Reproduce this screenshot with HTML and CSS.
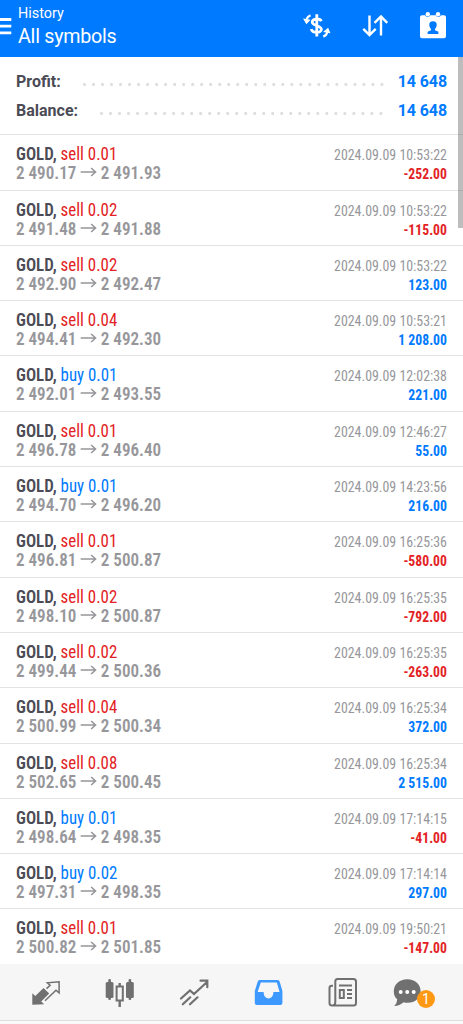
FILE: index.html
```html
<!DOCTYPE html>
<html lang="en">
<head>
<meta charset="utf-8">
<title>History</title>
<link rel="stylesheet" href="styles.css">
</head>
<body>
<div class="app">
<header class="bar">
  <svg class="menu" viewBox="0 0 12 18"><path d="M0 2.500h11.300M0 9.200h11.300M0 15.800h11.300"/></svg>
  <div class="titles"><div class="small">History</div><div class="big">All symbols</div></div>
  <div class="actions">
    <svg width="28" height="28" viewBox="0 0 28 28" fill="none" stroke="#fff" stroke-width="2.300"><path d="M18.300 9.300C17.300 6.300 9.400 6 9.200 10c0 4.200 9.200 3.200 9.200 7.200 0 4.400-9 4.200-10.200 0M13.800 2.200v22.300" stroke-width="2.800"/><path d="M7.500 3.300C5 4.300 4.100 5.500 3.500 7.500M20.300 24.600c2.300-1 3.500-2.200 4.200-4.500"/><path d="M0 6.500l7.600 1.300-4.200 4.500zM27.500 21.300l-7.400-1.300 5-4.300z" fill="#fff" stroke="none"/></svg>
    <svg width="28" height="28" viewBox="0 0 28 28" fill="none" stroke="#fff" stroke-width="2.400"><path d="M8.500 3.500v19.500M2.300 16.800l6.200 6.200 6.200-6.200M20 23.500V4.500M13.500 10.800L20 4.500l6.200 6.300"/></svg>
    <svg width="28" height="28" viewBox="0 0 28 28"><path fill="#fff" d="M3 3.200h3a3 3 0 0 0 5.400 0h5.200a3 3 0 0 0 5.400 0h3a2 2 0 0 1 2 2v19a2 2 0 0 1-2 2H3a2 2 0 0 1-2-2v-19a2 2 0 0 1 2-2z"/><circle cx="8.800" cy="2.300" r="2.200" fill="#fff"/><circle cx="19" cy="2.300" r="2.200" fill="#fff"/><path fill="#007aff" d="M14 9.300c2.600 0 3.900 1.600 3.700 3.800-.1 1.800-.8 3-1.700 3.900v1.300l3.400 1.400V22H8.600v-2.300l3.400-1.400V17c-.9-.9-1.600-2.100-1.700-3.900-.2-2.200 1.100-3.800 3.700-3.800z"/></svg>
  </div>
</header>
<main class="content">
<section class="summary">
  <div class="sum"><b>Profit:</b><i class="dots profit-dots"></i><strong>14 648</strong></div>
  <div class="sum"><b>Balance:</b><i class="dots balance-dots"></i><strong>14 648</strong></div>
</section>
<section class="deals">
<article class="deal"><div class="left"><p class="name">GOLD, <span class="sell">sell 0.01</span></p><p class="price">2 490.17 <svg class="arrow" viewBox="0 0 17 10"><path d="M0 5h15M11 1l4.500 4L11 9"/></svg> 2 491.93</p></div><div class="right"><time>2024.09.09 10:53:22</time><p class="amount sell">-252.00</p></div></article>
<article class="deal"><div class="left"><p class="name">GOLD, <span class="sell">sell 0.02</span></p><p class="price">2 491.48 <svg class="arrow" viewBox="0 0 17 10"><path d="M0 5h15M11 1l4.500 4L11 9"/></svg> 2 491.88</p></div><div class="right"><time>2024.09.09 10:53:22</time><p class="amount sell">-115.00</p></div></article>
<article class="deal"><div class="left"><p class="name">GOLD, <span class="sell">sell 0.02</span></p><p class="price">2 492.90 <svg class="arrow" viewBox="0 0 17 10"><path d="M0 5h15M11 1l4.500 4L11 9"/></svg> 2 492.47</p></div><div class="right"><time>2024.09.09 10:53:22</time><p class="amount buy">123.00</p></div></article>
<article class="deal"><div class="left"><p class="name">GOLD, <span class="sell">sell 0.04</span></p><p class="price">2 494.41 <svg class="arrow" viewBox="0 0 17 10"><path d="M0 5h15M11 1l4.500 4L11 9"/></svg> 2 492.30</p></div><div class="right"><time>2024.09.09 10:53:21</time><p class="amount buy">1 208.00</p></div></article>
<article class="deal"><div class="left"><p class="name">GOLD, <span class="buy">buy 0.01</span></p><p class="price">2 492.01 <svg class="arrow" viewBox="0 0 17 10"><path d="M0 5h15M11 1l4.500 4L11 9"/></svg> 2 493.55</p></div><div class="right"><time>2024.09.09 12:02:38</time><p class="amount buy">221.00</p></div></article>
<article class="deal"><div class="left"><p class="name">GOLD, <span class="sell">sell 0.01</span></p><p class="price">2 496.78 <svg class="arrow" viewBox="0 0 17 10"><path d="M0 5h15M11 1l4.500 4L11 9"/></svg> 2 496.40</p></div><div class="right"><time>2024.09.09 12:46:27</time><p class="amount buy">55.00</p></div></article>
<article class="deal"><div class="left"><p class="name">GOLD, <span class="buy">buy 0.01</span></p><p class="price">2 494.70 <svg class="arrow" viewBox="0 0 17 10"><path d="M0 5h15M11 1l4.500 4L11 9"/></svg> 2 496.20</p></div><div class="right"><time>2024.09.09 14:23:56</time><p class="amount buy">216.00</p></div></article>
<article class="deal"><div class="left"><p class="name">GOLD, <span class="sell">sell 0.01</span></p><p class="price">2 496.81 <svg class="arrow" viewBox="0 0 17 10"><path d="M0 5h15M11 1l4.500 4L11 9"/></svg> 2 500.87</p></div><div class="right"><time>2024.09.09 16:25:36</time><p class="amount sell">-580.00</p></div></article>
<article class="deal"><div class="left"><p class="name">GOLD, <span class="sell">sell 0.02</span></p><p class="price">2 498.10 <svg class="arrow" viewBox="0 0 17 10"><path d="M0 5h15M11 1l4.500 4L11 9"/></svg> 2 500.87</p></div><div class="right"><time>2024.09.09 16:25:35</time><p class="amount sell">-792.00</p></div></article>
<article class="deal"><div class="left"><p class="name">GOLD, <span class="sell">sell 0.02</span></p><p class="price">2 499.44 <svg class="arrow" viewBox="0 0 17 10"><path d="M0 5h15M11 1l4.500 4L11 9"/></svg> 2 500.36</p></div><div class="right"><time>2024.09.09 16:25:35</time><p class="amount sell">-263.00</p></div></article>
<article class="deal"><div class="left"><p class="name">GOLD, <span class="sell">sell 0.04</span></p><p class="price">2 500.99 <svg class="arrow" viewBox="0 0 17 10"><path d="M0 5h15M11 1l4.500 4L11 9"/></svg> 2 500.34</p></div><div class="right"><time>2024.09.09 16:25:34</time><p class="amount buy">372.00</p></div></article>
<article class="deal"><div class="left"><p class="name">GOLD, <span class="sell">sell 0.08</span></p><p class="price">2 502.65 <svg class="arrow" viewBox="0 0 17 10"><path d="M0 5h15M11 1l4.500 4L11 9"/></svg> 2 500.45</p></div><div class="right"><time>2024.09.09 16:25:34</time><p class="amount buy">2 515.00</p></div></article>
<article class="deal"><div class="left"><p class="name">GOLD, <span class="buy">buy 0.01</span></p><p class="price">2 498.64 <svg class="arrow" viewBox="0 0 17 10"><path d="M0 5h15M11 1l4.500 4L11 9"/></svg> 2 498.35</p></div><div class="right"><time>2024.09.09 17:14:15</time><p class="amount sell">-41.00</p></div></article>
<article class="deal"><div class="left"><p class="name">GOLD, <span class="buy">buy 0.02</span></p><p class="price">2 497.31 <svg class="arrow" viewBox="0 0 17 10"><path d="M0 5h15M11 1l4.500 4L11 9"/></svg> 2 498.35</p></div><div class="right"><time>2024.09.09 17:14:14</time><p class="amount buy">297.00</p></div></article>
<article class="deal"><div class="left"><p class="name">GOLD, <span class="sell">sell 0.01</span></p><p class="price">2 500.82 <svg class="arrow" viewBox="0 0 17 10"><path d="M0 5h15M11 1l4.500 4L11 9"/></svg> 2 501.85</p></div><div class="right"><time>2024.09.09 19:50:21</time><p class="amount sell">-147.00</p></div></article>
</section>
<div class="scroll"></div>
</main>
<nav class="tabs">
  <svg viewBox="0 0 32 32"><path fill="#707070" d="M2.300 28.800V17.300l3 2.700 8.200-8 5.700 5.500-8 7.900 3 2.900z"/><path fill="none" stroke="#707070" stroke-width="1.500" d="M15 24.800L26 14.300l3.100 2.600V5.800L17.300 6.800l2.800 2.500-3.600 3.300"/></svg>
  <svg viewBox="0 0 32 32"><g fill="#707070"><rect x="1.700" y="6" width="7.800" height="16" rx="1.500"/><rect x="4.300" y="3" width="2.600" height="21" rx="1"/><rect x="22" y="6" width="7.800" height="16" rx="1.500"/><rect x="24.600" y="3" width="2.600" height="21" rx="1"/></g><path d="M15.700 7V11M15.700 25v6" stroke="#707070" stroke-width="2.400"/><rect x="12.600" y="10.500" width="6.200" height="14" fill="none" stroke="#707070" stroke-width="2"/></svg>
  <svg viewBox="0 0 32 32" fill="none" stroke="#707070" stroke-width="2.200" stroke-linecap="round"><path d="M2 22.500l9-8 4 3.500L28 6M21.500 4.700H28.300v6.500M3.800 28.300l7.500-7M11 28.300l7.500-7"/></svg>
  <svg viewBox="0 0 32 32"><path fill="#3d99ff" fill-rule="evenodd" d="M7.500 4h16.500c1.500 0 2.300.6 2.800 2l2.600 9V27a2 2 0 0 1-2 2H3.800a2 2 0 0 1-2-2V15l2.800-9c.5-1.400 1.200-2 2.900-2zm.3 2.500L4.600 16h6c0 8.500 9.800 8.500 9.800 0h6.200L23.800 6.500z"/></svg>
  <svg viewBox="0 0 32 32" fill="none" stroke="#707070" stroke-width="2"><path d="M10.500 3h16a2.500 2.500 0 0 1 2.500 2.500v21.500a2.500 2.500 0 0 1-2.500 2.500H5A2.500 2.500 0 0 1 2.500 27V12q0-2.300 2.500-2.300h1M10.500 3Q8.300 3 8.300 5.500V26q0 3.500-3 3.500"/><path d="M12 9.500h13M20 14H25M20 18H25M20 22H25"/><rect x="12.800" y="14" width="4" height="8"/></svg>
  <div class="chat"><svg viewBox="0 0 32 32"><path fill="#707070" d="M15.300 3.300c8 0 13.300 5.300 13.300 12s-5.500 11.500-13 11.500q-2 0-4-.5-4 3.500-9.300 3.700 3-3 2.900-6.700C2.800 21.200 1.800 18.600 1.800 15.500c0-7 5.500-12.200 13.500-12.200z"/><g fill="#fff"><circle cx="8.700" cy="16" r="2"/><circle cx="15.200" cy="16" r="2"/><circle cx="21.700" cy="16" r="2"/></g></svg><span class="badge">1</span></div>
</nav>
<div class="foot"></div>
</div>
</body>
</html>
```
FILE: styles.css
```css
* { box-sizing: border-box; }
body, p { margin: 0; }
body { font-family: Roboto, sans-serif; background: #fff; }
.app { width: 463px; height: 1024px; display: flex; flex-direction: column; overflow: hidden; }
.bar { flex: none; height: 57px; background: #007aff; color: #fff; display: flex; }
.menu { width: 12px; height: 18px; margin-top: 17px; stroke: #fff; stroke-width: 2.800; }
.titles { margin-left: 6px; padding-top: 5px; flex: 1; }
.small { font-size: 14.400px; line-height: 17px; }
.big { font-size: 19.700px; line-height: 29px; letter-spacing: -.25px; }
.actions { display: flex; gap: 30px; padding: 12px 16px 0 0; }
.content { position: relative; flex: none; height: 907px; overflow: hidden; }
.summary { height: 77px; padding: 10px 16px 0; }
.sum { height: 28.700px; display: flex; align-items: center; font-size: 16px; color: #4b4b55; white-space: nowrap; }
.sum strong { color: #007aff; margin-left: auto; letter-spacing: -.1px; }
.dots { flex: none; height: 3px; margin-top: 6px; background: radial-gradient(circle at 1.500px 1.500px, #dedede 1.300px, transparent 1.700px) 0 0 / 9.020px 3px repeat-x; }
.profit-dots { width: 301px; margin-left: 22px; }
.balance-dots { width: 283px; margin-left: 22px; }
.deals { padding-top: .3px; }
.deal { height: 55.300px; border-top: 1.500px solid #e3e3e5; padding: 9px 16px 0; display: flex; justify-content: space-between; font-stretch: 75%; font-family: "Roboto Condensed", Roboto, sans-serif; white-space: nowrap; }
.left p { transform-origin: left; }
.right > * { transform-origin: right; }
.name { font-size: 18px; line-height: 20px; font-weight: 600; color: #4b4b55; transform: scaleX(.938); }
.name span { font-weight: 400; }
.price { font-size: 17.500px; line-height: 19px; font-weight: 600; color: #97979b; transform: scaleX(.976); }
.arrow { width: 17px; height: 10px; fill: none; stroke: #97979b; stroke-width: 1.600; vertical-align: 2px; }
.right { text-align: right; padding-top: 2px; }
time { display: block; font-size: 14.500px; line-height: 19px; color: #97979b; transform: scaleX(.957); }
.amount { font-size: 14.500px; line-height: 19px; font-weight: 700; transform: scaleX(.945); }
.sell { color: #e32224; }
.buy { color: #007aff; }
.scroll { position: absolute; top: 0; right: 0; width: 5px; height: 171px; background: rgba(90,90,90,.4); }
.tabs { flex: none; height: 56px; background: #f6f6f6; display: flex; gap: 42.400px; padding: 11.500px 0 0 30px; }
.tabs svg { width: 32px; height: 32px; flex: none; display: block; }
.tabs > svg:nth-child(5) { margin-left: -1px; margin-right: 1px; }
.chat { position: relative; width: 32px; margin-left: -10px; }
.badge { position: absolute; left: 25px; top: 14.500px; width: 18px; height: 18px; border-radius: 50%; background: #ff9914; color: #fff; font-size: 14px; line-height: 18px; text-align: center; }
.foot { height: 4px; border-top: 1px solid #dedede; background: #f9f9f9; }
```
